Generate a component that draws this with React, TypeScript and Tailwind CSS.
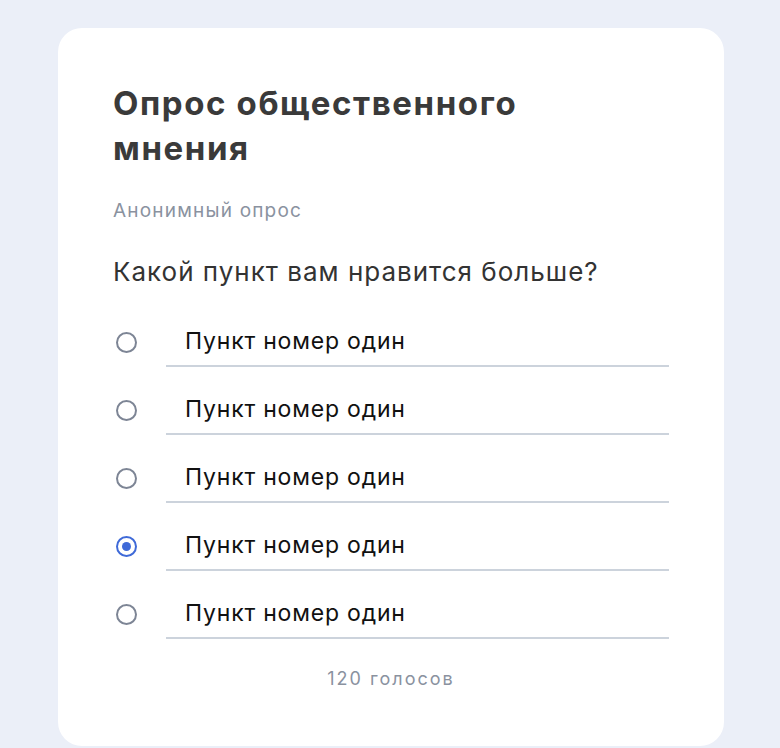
import React from "react";

const options = [false, false, false, true, false];

function Radio({ checked }: { checked: boolean }) {
  if (checked) {
    return (
      <div className="w-[21px] h-[21px] rounded-full border-2 border-[#3f6ad8] flex items-center justify-center">
        <div className="w-[9px] h-[9px] rounded-full bg-[#3f6ad8]" />
      </div>
    );
  }
  return <div className="w-[21px] h-[21px] rounded-full border-2 border-[#7d8595]" />;
}

export default function App() {
  return (
    <div
      className="w-[780px] h-[748px] bg-[#ebeff8] overflow-hidden pt-[28px] pl-[58px]"
      style={{ fontFamily: "Inter, 'Noto Sans', sans-serif" }}
    >
      <div className="w-[666px] h-[718px] bg-white rounded-[24px] pl-[55px] pr-[55px] pt-[53px]">
        <h1 className="text-[33px] leading-[45px] font-bold text-[#3a3a3a] tracking-[1.6px]">
          Опрос общественного
          <br />
          мнения
        </h1>
        <div className="mt-[28px] text-[19px] leading-[24px] text-[#8a929f] tracking-[1.2px]">
          Анонимный опрос
        </div>
        <div className="mt-[34px] text-[26px] leading-[30px] text-[#333333] tracking-[1px]">
          Какой пункт вам нравится больше?
        </div>
        <div className="mt-[12px] flex flex-col">
          {options.map((c, i) => (
            <div key={i} className="flex items-end h-[68px]">
              <div className="w-[53px] h-[50px] flex items-center pl-[3px]">
                <Radio checked={c} />
              </div>
              <div className="flex-1 h-[50px] border-b-2 border-[#ccd3dc] flex items-center pl-[19px]">
                <span className="text-[23px] text-[#111111] tracking-[0.8px]">Пункт номер один</span>
              </div>
            </div>
          ))}
        </div>
        <div className="mt-[28px] text-center text-[18px] leading-[24px] text-[#8a929f] tracking-[2px]">
          120 голосов
        </div>
      </div>
    </div>
  );
}
